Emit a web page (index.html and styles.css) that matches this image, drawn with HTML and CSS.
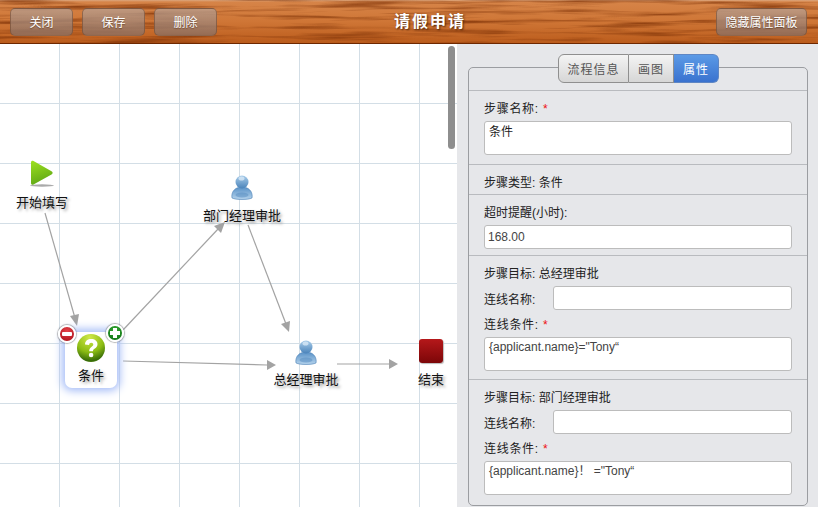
FILE: index.html
```html
<!DOCTYPE html>
<html lang="zh-CN">
<head>
<meta charset="utf-8">
<title>请假申请</title>
<link rel="stylesheet" href="styles.css">
</head>
<body>
<div class="app">
  <header class="topbar">
    <svg class="wood" width="818" height="44" aria-hidden="true">
      <defs>
        <filter id="grain" x="0" y="0" width="100%" height="100%" color-interpolation-filters="sRGB">
          <feTurbulence type="fractalNoise" baseFrequency="0.01 0.2" numOctaves="3" seed="11"/>
          <feColorMatrix type="matrix" values="0 0 0 0 0.50  0 0 0 0 0.20  0 0 0 0 0.03  2.6 0 0 0 -1.2"/>
        </filter>
      </defs>
      <rect width="818" height="44" filter="url(#grain)"/>
    </svg>
    <div class="btn-group">
      <button class="btn">关闭</button>
      <button class="btn">保存</button>
      <button class="btn">删除</button>
    </div>
    <h1 class="title">请假申请</h1>
    <button class="btn btn-wide">隐藏属性面板</button>
  </header>
  <main class="workspace">
    <section class="canvas">
      <svg class="edges" width="457" height="463" aria-hidden="true">
        <g class="edge">
          <line x1="45" y1="169" x2="75" y2="274"/><polygon points="77,282 70,272 79,270"/>
          <line x1="123" y1="286" x2="219" y2="184"/><polygon points="225,178 221,189 214,182"/>
          <line x1="248" y1="181" x2="286" y2="280"/><polygon points="289,288 281,280 290,277"/>
          <line x1="123" y1="317" x2="267" y2="321"/><polygon points="276,321 267,326 267,316"/>
          <line x1="337" y1="320" x2="390" y2="320"/><polygon points="398,320 389,315 389,325"/>
        </g>
      </svg>

      <div class="node node-start">
        <svg class="icon" width="26" height="28" viewBox="0 0 26 28" aria-hidden="true">
          <defs><linearGradient id="play" x1="0.2" y1="0" x2="0.5" y2="1"><stop offset="0" stop-color="#9ade1e"/><stop offset="1" stop-color="#5ea616"/></linearGradient></defs>
          <ellipse cx="13" cy="25.500" rx="12" ry="1.200" fill="#aaa"/>
          <path d="M2 2.500C2 1 3.200 .5 4.500 1.100L22.500 11.200C24 12 24 13.500 22.500 14.400L4.500 24.500C3.200 25.100 2 24.600 2 23Z" fill="url(#play)"/>
        </svg>
        <span class="node-label">开始填写</span>
      </div>

      <div class="node node-dept">
        <svg class="icon" width="24" height="26" viewBox="0 0 24 26" aria-hidden="true">
          <use href="#person"/>
        </svg>
        <span class="node-label">部门经理审批</span>
      </div>

      <div class="node node-cond">
        <svg class="icon" width="30" height="30" viewBox="0 0 30 30" aria-hidden="true">
          <defs>
            <radialGradient id="ball" cx="0.45" cy="0.12" r="0.95"><stop offset="0" stop-color="#d0e84a"/><stop offset="0.55" stop-color="#8cbc14"/><stop offset="0.88" stop-color="#386c08"/><stop offset="1" stop-color="#5a8c12"/></radialGradient>
          </defs>
          <circle cx="15" cy="15" r="14" fill="url(#ball)"/>
          <path d="M9 11.500C9 7.800 11.800 6 15.200 6 18.800 6 21.500 8 21.500 11.300 21.500 13.700 20 14.800 18.500 15.800 17.400 16.600 17 17 17 18.200H13.200C13.200 16.100 14 15 15.400 14 16.500 13.200 17.300 12.700 17.300 11.600 17.300 10.500 16.400 9.800 15.200 9.800 14 9.800 13.200 10.600 13.100 11.900Z" fill="#fff"/>
          <circle cx="15.100" cy="22" r="2.300" fill="#fff"/>
        </svg>
        <span class="node-label">条件</span>
        <span class="badge badge-remove"><svg width="14" height="14" viewBox="0 0 14 14" aria-hidden="true"><rect x="2" y="5" width="10" height="4" fill="#fff" rx="1"/></svg></span>
        <span class="badge badge-add"><svg width="14" height="14" viewBox="0 0 14 14" aria-hidden="true"><path d="M5 2h4v3h3v4H9v3H5V9H2V5h3Z" fill="#fff"/></svg></span>
      </div>

      <div class="node node-manager">
        <svg class="icon" width="24" height="26" viewBox="0 0 24 26" aria-hidden="true">
          <defs>
            <linearGradient id="skin" x1="0" y1="0" x2="0" y2="1"><stop offset="0" stop-color="#a9cdea"/><stop offset="1" stop-color="#4a83ba"/></linearGradient>
            <linearGradient id="torso" x1="0" y1="0" x2="0" y2="1"><stop offset="0" stop-color="#5b93c8"/><stop offset="1" stop-color="#b5d3ec"/></linearGradient>
            <g id="person">
              <path d="M2 24C1 19 4 14.500 8.500 13.500H15.500C20 14.500 23 19 22 24 18 26 6 26 2 24Z" fill="url(#torso)" stroke="#4a80b5" stroke-width=".6"/>
              <ellipse cx="12" cy="21" rx="6.500" ry="2.500" fill="#4f87bd" opacity=".45"/>
              <circle cx="12" cy="8" r="6.500" fill="url(#skin)"/>
              <ellipse cx="11.500" cy="4.500" rx="3" ry="2" fill="#d8e9f6" opacity=".8"/>
            </g>
          </defs>
          <use href="#person"/>
        </svg>
        <span class="node-label">总经理审批</span>
      </div>

      <div class="node node-end">
        <span class="end-icon"></span>
        <span class="node-label">结束</span>
      </div>

      <div class="scroll-thumb"></div>
    </section>

    <aside class="panel">
      <div class="panel-box">
        <nav class="tabs">
          <span class="tab">流程信息</span>
          <span class="tab">画图</span>
          <span class="tab tab-active">属性</span>
        </nav>

        <div class="sec sec-name">
          <div class="lbl lbl-wide">步骤名称: <em class="req">*</em></div>
          <textarea class="area area-top">条件</textarea>
        </div>
        <div class="sec sec-type">
          <div class="lbl">步骤类型: 条件</div>
        </div>
        <div class="sec sec-timeout">
          <div class="lbl">超时提醒(小时):</div>
          <input class="inp" type="text" value="168.00">
        </div>
        <div class="sec sec-target">
          <div class="lbl">步骤目标: 总经理审批</div>
          <div class="row">
            <label class="row-lbl">连线名称:</label>
            <input class="inp inp-row" type="text">
          </div>
          <div class="lbl lbl-wide lbl-cond">连线条件: <em class="req">*</em></div>
          <textarea class="area">{applicant.name}="Tony“</textarea>
        </div>
        <div class="sec sec-target sec-last">
          <div class="lbl">步骤目标: 部门经理审批</div>
          <div class="row">
            <label class="row-lbl">连线名称:</label>
            <input class="inp inp-row" type="text">
          </div>
          <div class="lbl lbl-wide lbl-cond">连线条件: <em class="req">*</em></div>
          <textarea class="area">{applicant.name}！ ="Tony“</textarea>
        </div>
      </div>
    </aside>
  </main>
</div>
</body>
</html>
```

FILE: styles.css
```css
* { box-sizing: border-box; }
html, body { margin: 0; height: 100%; overflow: hidden; }
body {
  font-family: "Liberation Sans", "Noto Sans CJK SC", sans-serif;
  font-size: 12px;
  color: #222;
  background: #fff;
}
.app { width: 818px; height: 507px; display: flex; flex-direction: column; }

/* top bar */
.topbar {
  position: relative;
  height: 44px;
  flex: none;
  display: flex;
  align-items: center;
  justify-content: space-between;
  padding: 0 11px 0 10px;
  background: linear-gradient(#dba67e 0, #d68448 2px, #cf7636 50%, #bb5c1c 100%);
  border-bottom: 1px solid #6e2800;
  overflow: hidden;
}
.wood { position: absolute; left: 0; top: 0; opacity: .8; }
.btn-group { position: relative; display: flex; gap: 9px; }
.btn {
  position: relative;
  width: 63px;
  height: 28px;
  padding: 0;
  border: 1px solid rgba(110, 70, 45, .55);
  border-radius: 5px;
  background: linear-gradient(rgba(185, 160, 145, .75), rgba(140, 110, 95, .82));
  color: #fff;
  font: 12px "Liberation Sans", "Noto Sans CJK SC", sans-serif;
  text-shadow: 0 1px 1px rgba(60, 30, 10, .5);
}
.btn-wide { width: 91px; }
.title {
  position: absolute;
  left: 394px;
  top: 12px;
  margin: 0;
  font-size: 16px;
  line-height: 20px;
  font-weight: 700;
  letter-spacing: 2px;
  color: #fff;
  text-shadow: 1px 1px 2px rgba(50, 20, 0, .8);
}

/* canvas */
.workspace { flex: 1; display: flex; min-height: 0; }
.canvas {
  position: relative;
  width: 457px;
  flex: none;
  background-color: #fff;
  background-image:
    linear-gradient(to right, transparent 59px, #d3dee6 59px),
    linear-gradient(to bottom, transparent 59px, #d3dee6 59px);
  background-size: 60px 60px;
  overflow: hidden;
}
.edges { position: absolute; left: 0; top: 0; }
.edge line { stroke: #a3a3a3; stroke-width: 1.2; }
.edge polygon { fill: #a3a3a3; }
.node {
  position: absolute;
  display: flex;
  flex-direction: column;
  align-items: center;
  width: 100px;
}
.icon { display: block; flex: none; }
.node-label {
  font-size: 13px;
  line-height: 18px;
  color: #111;
  white-space: nowrap;
  text-shadow: 2px 2px 3px #999;
}
.node-start { left: -8px; top: 116px; }
.node-start .node-label { margin-top: 6px; }
.node-dept { left: 192px; top: 130px; }
.node-dept .node-label { margin-top: 7px; }
.node-cond {
  left: 65px;
  top: 288px;
  width: 52px;
  height: 56px;
  padding-top: 1px;
  background: #fff;
  border-radius: 7px;
  box-shadow: 0 0 9px 3px #a6bdf7;
}
.node-cond .node-label { margin-top: 4px; }
.node-manager { left: 256px; top: 295px; }
.node-manager .node-label { margin-top: 6px; }
.node-end { left: 381px; top: 295px; }
.end-icon {
  width: 24px;
  height: 24px;
  border-radius: 3px;
  background: linear-gradient(#b5181a, #7c0608);
  box-shadow: 1px 1px 1px #bbb;
}
.node-end .node-label { margin-top: 8px; }
.badge {
  position: absolute;
  width: 18px;
  height: 18px;
  display: flex;
  align-items: center;
  justify-content: center;
  border-radius: 50%;
  border: 2px solid #fff;
  box-shadow: 0 0 1px 1px rgba(90, 90, 90, .45);
}
.badge svg { display: block; flex: none; }
.badge-remove { left: -7px; top: -7px; background: radial-gradient(circle at 50% 30%, #e5434a, #a80d16); }
.badge-add { right: -7px; top: -8px; background: radial-gradient(circle at 50% 30%, #33a932, #0a6b10); }
.scroll-thumb {
  position: absolute;
  left: 448px;
  top: 2px;
  width: 7px;
  height: 103px;
  border-radius: 4px;
  background: #8e8e8e;
}

/* panel */
.panel {
  flex: 1;
  background: #e6e7ea;
  padding: 23px 11px 0;
}
.panel-box {
  border: 1px solid #9b9da1;
  border-radius: 5px;
  height: 439px;
}
.tabs {
  display: flex;
  justify-content: center;
  margin: -14px 0 7px;
  padding-left: 1px;
  height: 29px;
}
.tab {
  display: flex;
  align-items: center;
  justify-content: center;
  height: 29px;
  padding: 0 8px;
  border: 1px solid #8f8f8f;
  border-left-width: 0;
  background: linear-gradient(#f4f4f4, #d6d6d6);
  color: #555;
  font-size: 12px;
  letter-spacing: 1px;
}
.tab:first-child { border-left-width: 1px; border-radius: 6px 0 0 6px; width: 71px; }
.tab:nth-child(2) { width: 45px; }
.tab-active {
  width: 45px;
  border-radius: 0 6px 6px 0;
  border-color: #5e86c4;
  background: linear-gradient(#5b9ae6, #3a72cf);
  color: #fff;
}
.sec { padding: 10px 15px 0; border-top: 1px solid #b9bbbf; }
.sec-name { height: 74px; }
.sec-type { height: 30px; }
.sec-timeout { height: 61px; }
.sec-target { height: 124px; }
.sec-last { height: 125px; }
.lbl { line-height: 17px; color: #222; }
.lbl-wide { letter-spacing: .7px; }
.lbl-wide .req { margin-left: 0; }
.lbl-cond { margin-top: 7px; }
.req { color: #e11; font-style: normal; margin-left: 2px; }
.inp, .area {
  display: block;
  width: 308px;
  border: 1px solid #bcbcbc;
  border-radius: 3px;
  background: #fff;
  font: 12px "Liberation Sans", "Noto Sans CJK SC", sans-serif;
  color: #444;
  outline: none;
}
.inp { height: 24px; margin-top: 3px; padding: 0 3px; }
.area {
  height: 34px;
  margin-top: 3px;
  padding: 1px 4px;
  line-height: 16px;
  resize: none;
  overflow: hidden;
}
.area-top { color: #222; padding-top: 2px; }
.row { display: flex; align-items: center; margin-top: 3px; }
.row-lbl { width: 69px; flex: none; color: #222; }
.inp-row { width: 239px; margin-top: 0; }
```
